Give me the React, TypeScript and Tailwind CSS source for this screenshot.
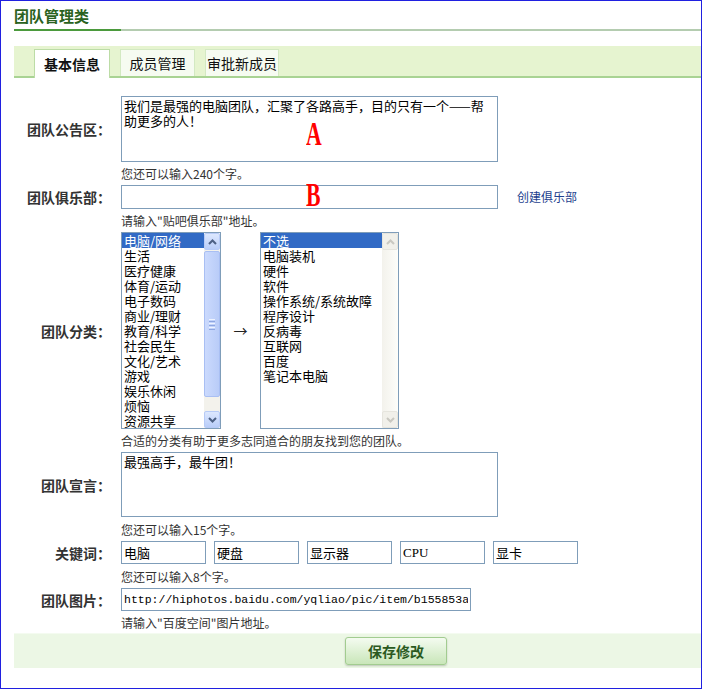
import React from "react";

const Up = ({ c }: { c: string }) => (
  <svg width="9" height="6" viewBox="0 0 9 6">
    <path d="M1 5 L4.5 1.5 L8 5" fill="none" stroke={c} strokeWidth="2" />
  </svg>
);
const Down = ({ c }: { c: string }) => (
  <svg width="9" height="6" viewBox="0 0 9 6">
    <path d="M1 1 L4.5 4.5 L8 1" fill="none" stroke={c} strokeWidth="2" />
  </svg>
);

function ScrollBar({ enabled }: { enabled: boolean }) {
  if (enabled) {
    return (
      <div className="w-[16px] h-full shrink-0 flex flex-col bg-[#f3f2ec]">
        <div className="h-[17px] rounded-[2px] border border-[#b7cbf7] bg-linear-to-b from-[#dde8fe] to-[#b9cdf9] flex items-center justify-center">
          <Up c="#4d6185" />
        </div>
        <div className="mt-[1px] h-[146px] rounded-[2px] border border-[#a9bff3] bg-linear-to-r from-[#cbdafd] to-[#b9ccf8] flex flex-col items-center justify-center gap-[1px]">
          <div className="w-[6px] h-[1px] bg-[#eef3ff]" />
          <div className="w-[6px] h-[1px] bg-[#8ea6e0]" />
          <div className="w-[6px] h-[1px] bg-[#eef3ff]" />
          <div className="w-[6px] h-[1px] bg-[#8ea6e0]" />
          <div className="w-[6px] h-[1px] bg-[#eef3ff]" />
          <div className="w-[6px] h-[1px] bg-[#8ea6e0]" />
        </div>
        <div className="flex-1" />
        <div className="h-[17px] rounded-[2px] border border-[#b7cbf7] bg-linear-to-b from-[#dde8fe] to-[#b9cdf9] flex items-center justify-center">
          <Down c="#4d6185" />
        </div>
      </div>
    );
  }
  return (
    <div className="w-[16px] h-full shrink-0 flex flex-col bg-linear-to-r from-[#f3f2ec] to-[#fdfdfa]">
      <div className="h-[17px] rounded-[2px] border border-[#e6e5de] bg-[#f1f0ea] flex items-center justify-center">
        <Up c="#c9c8c1" />
      </div>
      <div className="flex-1" />
      <div className="h-[17px] rounded-[2px] border border-[#e6e5de] bg-[#f1f0ea] flex items-center justify-center">
        <Down c="#c9c8c1" />
      </div>
    </div>
  );
}

function ListBox({ items, width, enabled }: { items: string[]; width: string; enabled: boolean }) {
  return (
    <div className={`${width} h-[197px] border border-[#7f9db9] bg-white flex overflow-hidden`}>
      <div className="flex-1 flex flex-col text-[13px] leading-[15px] text-black">
        {items.map((it, i) => (
          <div
            key={it}
            className={`h-[15px] shrink-0 pl-[2px] whitespace-nowrap ${i === 0 ? "bg-[#316ac5] text-white" : ""}`}
          >
            {it}
          </div>
        ))}
      </div>
      <ScrollBar enabled={enabled} />
    </div>
  );
}

function Row({ label, children, className = "" }: { label: string; children: React.ReactNode; className?: string }) {
  return (
    <div className={`flex items-center ${className}`}>
      <div className="w-[97px] shrink-0 text-right text-[14px] font-bold leading-none text-[#333]">{label}</div>
      <div className="ml-[10px] flex items-center">{children}</div>
    </div>
  );
}

function Hint({ children, className = "mt-[4px]" }: { children: React.ReactNode; className?: string }) {
  return <div className={`pl-[107px] text-[12px] leading-[16px] text-[#333] ${className}`}>{children}</div>;
}

const inputCls =
  "border border-[#7f9db9] bg-white outline-none px-[2px] text-[13px] text-black font-['Liberation_Serif','Noto_Sans_CJK_SC',serif]";

export default function App() {
  const left = [
    "电脑/网络",
    "生活",
    "医疗健康",
    "体育/运动",
    "电子数码",
    "商业/理财",
    "教育/科学",
    "社会民生",
    "文化/艺术",
    "游戏",
    "娱乐休闲",
    "烦恼",
    "资源共享",
  ];
  const right = ["不选", "电脑装机", "硬件", "软件", "操作系统/系统故障", "程序设计", "反病毒", "互联网", "百度", "笔记本电脑"];
  const keywords = ["电脑", "硬盘", "显示器", "CPU", "显卡"];

  return (
    <div className="w-[702px] h-[689px] border border-[#2020e0] bg-white pl-[13px] font-['Noto_Sans_CJK_SC',sans-serif] text-[#333]">
      <div className="h-[28px] flex items-center text-[15px] font-bold leading-none text-[#2a6220]">团队管理类</div>
      <div className="flex h-[2px]">
        <div className="w-[107px] bg-[#4b9a3d]" />
        <div className="flex-1 bg-[#b4ccb0]" />
      </div>

      <div className="mt-[15px] h-[32px] bg-[#e6f4d0] border-b-2 border-[#a9d393] flex items-end pl-[20px] gap-[10px]">
        <div className="w-[76px] h-[29px] -mb-[2px] bg-white border border-b-0 border-[#bcdca6] flex items-center justify-center text-[14px] font-bold text-[#111]">
          基本信息
        </div>
        <div className="w-[75px] h-[27px] bg-[#f6fbf1] border border-b-0 border-[#d3e9c2] flex items-center justify-center text-[14px] text-[#111]">
          成员管理
        </div>
        <div className="w-[74px] h-[27px] bg-[#f6fbf1] border border-b-0 border-[#d3e9c2] flex items-center justify-center text-[14px] text-[#111]">
          审批新成员
        </div>
      </div>

      <div className="mt-[18px]">
        <Row label="团队公告区：">
          <div className="relative">
            <textarea
              readOnly
              wrap="off"
              value={"我们是最强的电脑团队，汇聚了各路高手，目的只有一个——帮\n助更多的人！"}
              className="block w-[377px] h-[66px] resize-none overflow-hidden border border-[#7f9db9] px-[2px] pt-[1px] text-[13px] leading-[15px] text-black outline-none"
            />
            <span className="absolute left-[185px] top-[21px] origin-left scale-x-[0.64] text-[34px] font-bold leading-none text-[#f00] font-['Liberation_Serif',serif]">
              A
            </span>
          </div>
        </Row>
        <Hint>您还可以输入240个字。</Hint>

        <Row label="团队俱乐部：" className="mt-[3px]">
          <div className="relative">
            <input readOnly value="" className={`${inputCls} block w-[377px] h-[24px]`} />
            <span className="absolute left-[185px] -top-[7px] origin-left scale-x-[0.64] text-[34px] font-bold leading-none text-[#f00] font-['Liberation_Serif',serif]">
              B
            </span>
          </div>
          <span className="ml-[19px] text-[12px] text-[#1e3f8e]">创建俱乐部</span>
        </Row>
        <Hint>请输入"贴吧俱乐部"地址。</Hint>

        <Row label="团队分类：" className="mt-[3px]">
          <ListBox items={left} width="w-[100px]" enabled />
          <div className="w-[39px] text-center text-[14px] text-[#222]">→</div>
          <ListBox items={right} width="w-[139px]" enabled={false} />
        </Row>
        <Hint className="mt-[4px]">合适的分类有助于更多志同道合的朋友找到您的团队。</Hint>

        <Row label="团队宣言：" className="mt-[3px]">
          <textarea
            readOnly
            wrap="off"
            value="最强高手，最牛团！"
            className="block w-[377px] h-[65px] resize-none overflow-hidden border border-[#7f9db9] px-[2px] pt-[1px] text-[13px] leading-[15px] text-black outline-none"
          />
        </Row>
        <Hint className="mt-[5px]">您还可以输入15个字。</Hint>

        <Row label="关键词：" className="mt-[3px]">
          <div className="flex gap-[8px]">
            {keywords.map((k) => (
              <input key={k} readOnly value={k} className={`${inputCls} w-[85px] h-[23px]`} />
            ))}
          </div>
        </Row>
        <Hint className="mt-[5px]">您还可以输入8个字。</Hint>

        <Row label="团队图片：" className="mt-[3px]">
          <input
            readOnly
            value="http://hiphotos.baidu.com/yqliao/pic/item/b155853a9d8b2e0a.jpg"
            className="block w-[350px] h-[23px] border border-[#7f9db9] px-[2px] text-[11.5px] text-black outline-none font-['Liberation_Mono',monospace]"
          />
        </Row>
        <Hint>请输入"百度空间"图片地址。</Hint>
      </div>

      <div className="mt-[2px] h-[35px] bg-[#ecf7e5] border-t border-[#f4fbf0] flex items-center">
        <button className="ml-[331px] w-[102px] h-[28px] rounded-[3px] border border-[#a2cc90] bg-linear-to-b from-[#f4fbf0] to-[#c9e6b9] shadow-[0_1px_2px_rgba(0,0,0,0.2)] text-[14px] font-bold text-[#2b5a1f]">
          保存修改
        </button>
      </div>
    </div>
  );
}
